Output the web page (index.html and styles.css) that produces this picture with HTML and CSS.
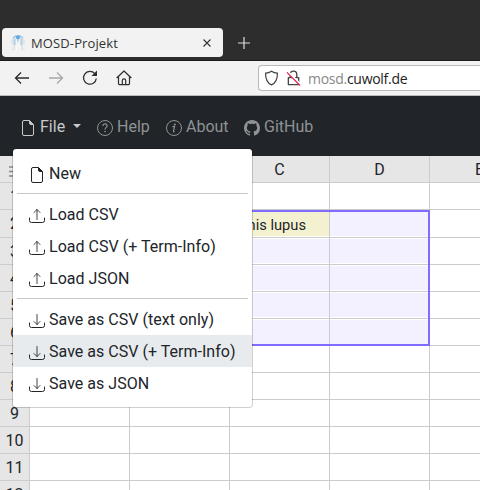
FILE: index.html
```
<!DOCTYPE html>
<html lang="en">
<head>
<meta charset="utf-8">
<title>MOSD-Projekt</title>
<link rel="stylesheet" href="styles.css">
</head>
<body>
<svg class="defs" aria-hidden="true">
  <symbol id="file" viewBox="0 0 16 16"><path d="M9.5 .5H4A1.5 1.5 0 0 0 2.5 2v12A1.5 1.5 0 0 0 4 15.500h8a1.500 1.500 0 0 0 1.500-1.500V4.500zM9.500.5V3A1.500 1.500 0 0 0 11 4.500h2.500" fill="none" stroke="currentColor"/><path d="M9.500.5l4 4H11A1.500 1.500 0 0 1 9.500 3z" fill="currentColor"/></symbol>
  <symbol id="up" viewBox="0 0 16 16"><path d="M.5 10v2.500a2 2 0 0 0 2 2h11a2 2 0 0 0 2-2V10" fill="none" stroke="currentColor" stroke-linecap="round"/><path d="M8 11.500V1.500M5 4.500l3-3 3 3" fill="none" stroke="currentColor" stroke-opacity=".85" stroke-linecap="round" stroke-linejoin="round"/></symbol>
  <symbol id="down" viewBox="0 0 16 16"><path d="M.5 10v2.500a2 2 0 0 0 2 2h11a2 2 0 0 0 2-2V10" fill="none" stroke="currentColor" stroke-linecap="round"/><path d="M8 1.500v10M5 8.500l3 3 3-3" fill="none" stroke="currentColor" stroke-opacity=".85" stroke-linecap="round" stroke-linejoin="round"/></symbol>
</svg>

<header class="tabs">
  <div class="tab">
    <svg class="favicon" viewBox="0 0 16 16"><path d="M1 15V6l2-3 3-1v13H1z" fill="#e1e3e5"/><path d="M10 15V2l3 1 2 3v9z" fill="#e1e3e5"/><path d="M3 3l3-2h4l3 2" stroke="#8cc4ea" stroke-width="1.500" fill="none"/><circle cx="8" cy="2.500" r="2" fill="#62a8d8"/><path d="M4.500 4v6M11.500 4v6M8 4v3" stroke="#a6d2f0" stroke-width="1.500"/><path d="M2 9v5M6 10v5M10 10v5M14 9v5" stroke="#fff"/></svg>
    <span class="title">MOSD-Projekt</span>
    <svg class="close" viewBox="0 0 8 8"><path d="M.5.5l7 7M7.500.5l-7 7" stroke="#333" stroke-width="1.100"/></svg>
  </div>
  <svg class="plus" viewBox="0 0 12 12"><path d="M6 0v12M0 6h12" stroke="#ddd" stroke-width="1.200"/></svg>
</header>

<div class="toolbar">
  <svg class="tool" viewBox="0 0 16 16"><path d="M15 8H1.500M7 2.500L1.500 8 7 13.500" fill="none" stroke="#2e2e2e" stroke-width="1.300"/></svg>
  <svg class="tool" viewBox="0 0 16 16"><path d="M1 8h13.500M9 2.500L14.500 8 9 13.500" fill="none" stroke="#a8a8a8" stroke-width="1.300"/></svg>
  <svg class="tool" viewBox="0 0 16 16"><path d="M12.800 3.600A6.400 6.400 0 1 0 14.300 8.500" fill="none" stroke="#2e2e2e" stroke-width="1.300"/><path d="M15 .5V6H9.500z" fill="#2e2e2e"/></svg>
  <svg class="tool" viewBox="0 0 16 16"><path d="M.7 8L8 1l7.300 7M2.500 6.500v7a1.200 1.200 0 0 0 1.200 1.200h8.600a1.200 1.200 0 0 0 1.200-1.200v-7M6.300 14.500v-4a1.700 1.700 0 0 1 3.400 0v4" fill="none" stroke="#2e2e2e" stroke-width="1.200" stroke-linejoin="round"/></svg>
  <div class="address">
    <svg class="shield" viewBox="0 0 16 16"><path d="M8 .8c2 1.300 4 1.900 6.300 2.100C14.500 9 13 13 8 15.300 3 13 1.500 9 1.700 2.900 4 2.700 6 2.100 8 .8z" fill="none" stroke="#444" stroke-width="1.300"/></svg>
    <svg class="lock" viewBox="0 0 16 16"><path d="M2.500 7.500h11v7.500h-11zM4.500 7.500V4.200a3.500 3.500 0 0 1 7 0v3.300" fill="none" stroke="#444" stroke-width="1.400" stroke-linejoin="round"/><path d="M2 1.500L15.500 15" stroke="#fff" stroke-width="2.500"/><path d="M1 2L15 16" stroke="#e22850" stroke-width="1.400"/></svg>
    <span class="url">mosd.<b>cuwolf.de</b></span>
  </div>
</div>

<nav class="navbar">
  <div class="nav file active"><svg class="icon"><use href="#file"/></svg><span>File</span><i class="caret"></i></div>
  <div class="nav help"><svg class="icon" viewBox="0 0 16 16"><circle cx="8" cy="8" r="7.500" fill="none" stroke="currentColor"/><path d="M5.900 5.900C5.900 3.300 10.100 3.300 10.100 5.900 10.100 7.400 8 7.500 8 9.500" fill="none" stroke="currentColor" stroke-width="1.200"/><circle cx="8" cy="11.500" r=".85" fill="currentColor"/></svg><span>Help</span></div>
  <div class="nav about"><svg class="icon" viewBox="0 0 16 16"><circle cx="8" cy="8" r="7.500" fill="none" stroke="currentColor"/><path d="M6.500 6.700l2-.2-1 4.700c-.1.700.3.800 1 .3" fill="none" stroke="currentColor" stroke-width="1.200"/><circle cx="8.800" cy="4.500" r="1" fill="currentColor"/></svg><span>About</span></div>
  <div class="nav github"><svg class="icon" viewBox="0 0 16 16"><path fill="currentColor" d="M8 0C3.580 0 0 3.580 0 8c0 3.540 2.290 6.530 5.470 7.590.4.070.55-.17.55-.38 0-.19-.01-.82-.01-1.490-2.010.37-2.530-.49-2.690-.94-.09-.23-.48-.94-.82-1.130-.28-.15-.68-.52-.01-.53.63-.01 1.080.58 1.230.82.72 1.210 1.870.87 2.330.66.07-.52.28-.87.51-1.070-1.780-.2-3.640-.89-3.640-3.950 0-.87.31-1.590.82-2.150-.08-.2-.36-1.020.08-2.120 0 0 .67-.21 2.200.82.64-.18 1.320-.27 2-.27s1.360.09 2 .27c1.530-1.040 2.200-.82 2.200-.82.44 1.100.16 1.920.08 2.120.51.56.82 1.270.82 2.150 0 3.070-1.870 3.750-3.650 3.950.29.25.54.73.54 1.480 0 1.070-.01 1.930-.01 2.200 0 .21.15.46.55.38A8.010 8.010 0 0 0 16 8c0-4.420-3.580-8-8-8z"/></svg><span>GitHub</span></div>

  <div class="menu">
    <div class="item"><svg class="icon"><use href="#file"/></svg><span>New</span></div>
    <hr>
    <div class="item"><svg class="icon"><use href="#up"/></svg><span>Load CSV</span></div>
    <div class="item"><svg class="icon"><use href="#up"/></svg><span>Load CSV (+ Term-Info)</span></div>
    <div class="item"><svg class="icon"><use href="#up"/></svg><span>Load JSON</span></div>
    <hr>
    <div class="item"><svg class="icon"><use href="#down"/></svg><span>Save as CSV (text only)</span></div>
    <div class="item hover"><svg class="icon"><use href="#down"/></svg><span>Save as CSV (+ Term-Info)</span></div>
    <div class="item"><svg class="icon"><use href="#down"/></svg><span>Save as JSON</span></div>
  </div>
</nav>

<main class="sheet">
  <div class="row head"><span class="corner"><svg class="handle" viewBox="0 0 12 11"><path d="M0 1h12M0 5.500h12M0 10h12" stroke="#888" stroke-width="1.500"/></svg></span><span></span><span></span><span>C</span><span>D</span><span>E</span></div>
  <div class="row"><b>1</b><span></span><span></span><span></span><span></span><span></span></div>
  <div class="row tall"><b>2</b><span class="sel"></span><span class="sel"></span><span class="sel term">Canis lupus</span><span class="sel"></span><span></span></div>
  <div class="row"><b>3</b><span class="sel"></span><span class="sel"></span><span class="sel"></span><span class="sel"></span><span></span></div>
  <div class="row"><b>4</b><span class="sel"></span><span class="sel"></span><span class="sel"></span><span class="sel"></span><span></span></div>
  <div class="row"><b>5</b><span class="sel"></span><span class="sel"></span><span class="sel"></span><span class="sel"></span><span></span></div>
  <div class="row"><b>6</b><span class="sel"></span><span class="sel"></span><span class="sel"></span><span class="sel"></span><span></span></div>
  <div class="row"><b>7</b><span></span><span></span><span></span><span></span><span></span></div>
  <div class="row"><b>8</b><span></span><span></span><span></span><span></span><span></span></div>
  <div class="row"><b>9</b><span></span><span></span><span></span><span></span><span></span></div>
  <div class="row"><b>10</b><span></span><span></span><span></span><span></span><span></span></div>
  <div class="row"><b>11</b><span></span><span></span><span></span><span></span><span></span></div>
  <div class="row"><b>12</b><span></span><span></span><span></span><span></span><span></span></div>
  <div class="selection"></div>
</main>
</body>
</html>
```
FILE: styles.css
```
* { box-sizing: border-box; }
body { margin: 0; width: 480px; height: 490px; overflow: hidden; background: #fff; color: #212529; font: 16px/24px Roboto, sans-serif; }
svg { display: block; flex: none; overflow: visible; }
.defs { display: none; }

.tabs { display: flex; align-items: center; height: 61px; padding: 24px 0 0 2px; background: #2d2d2d; border-bottom: 1px solid #1c1c1c; }
.tab { display: flex; align-items: center; width: 221px; height: 29px; padding: 0 12px 0 8px; border-radius: 4px; background: #f2f2f2; }
.favicon { width: 16px; height: 16px; margin-top: 2px; }
.title { flex: 1; margin-left: 5px; padding-top: 2px; font: 13px/20px "Open Sans", sans-serif; letter-spacing: .12px; color: #333; }
.close { width: 8px; height: 8px; margin-top: 1px; }
.plus { width: 12px; height: 12px; margin: 2px 0 0 15px; }

.toolbar { display: flex; align-items: center; gap: 18px; height: 35px; padding-left: 14px; background: #f2f2f2; border-bottom: 1px solid #b8bcbb; }
.tool { width: 16px; height: 16px; }
.address { display: flex; align-items: center; width: 222px; height: 26px; margin-left: 108px; padding-left: 5px; border: 1px solid #b8b8b8; border-right: 0; border-radius: 4px 0 0 4px; background: #fff; }
.shield { width: 15px; height: 16px; }
.lock { width: 15px; height: 16px; margin-left: 7px; }
.url { margin-left: 7px; padding-top: 2px; font: 14px/20px "Open Sans", sans-serif; letter-spacing: -.28px; color: #888; white-space: nowrap; }
.url b { font-weight: 400; color: #222; }

.navbar { position: relative; z-index: 2; display: flex; height: 60px; padding-left: 20px; background: #212529; color: #909294; }
.nav { display: flex; align-items: center; height: 60px; }
.nav span { margin-left: 4px; padding-top: 2px; }
.icon { width: 16px; height: 16px; margin-top: 4px; }
.file { width: 77px; }
.help { width: 69px; }
.about { width: 78px; }
.active { color: #c8c9ca; }
.caret { margin-left: 8px; border: 4px solid transparent; border-top-color: currentColor; border-bottom: 0; }

.menu { position: absolute; left: 12px; top: 52px; width: 241px; height: 260px; padding: 8px 0; border: 1px solid rgba(0, 0, 0, .18); border-radius: 4px; background: #fff; background-clip: padding-box; color: #212529; }
.item { display: flex; align-items: center; height: 32px; padding-left: 16px; gap: 4px; white-space: nowrap; }
.item span { padding-top: 2px; letter-spacing: .02px; }
.hover { background: #e7ebee; }
.menu hr { height: 1px; margin: 4px; border: 0; background: #c8c8c8; }

.sheet { position: relative; width: 480px; overflow: hidden; }
.row { display: grid; grid-template-columns: 30px repeat(5, 100px); height: 27px; }
.tall { height: 28px; }
.row > * { border-right: 1px solid #ccc; border-bottom: 1px solid #ccc; text-align: center; font-weight: 400; line-height: 27px; overflow: hidden; }
.row b, .head > * { background: #e6e6e6; }
.head .corner { padding: 10px 0 0 9px; }
.handle { width: 12px; height: 11px; }
.row .sel { padding: 1px 0; background-color: #f3f1ff; background-clip: content-box; }
.row .term { background-color: #f4f1d0; font-size: 14.7px; text-align: left; line-height: 29px; }
.selection { position: absolute; left: 29px; top: 54px; width: 401px; height: 136px; border: 2px solid #806dff; }
```
